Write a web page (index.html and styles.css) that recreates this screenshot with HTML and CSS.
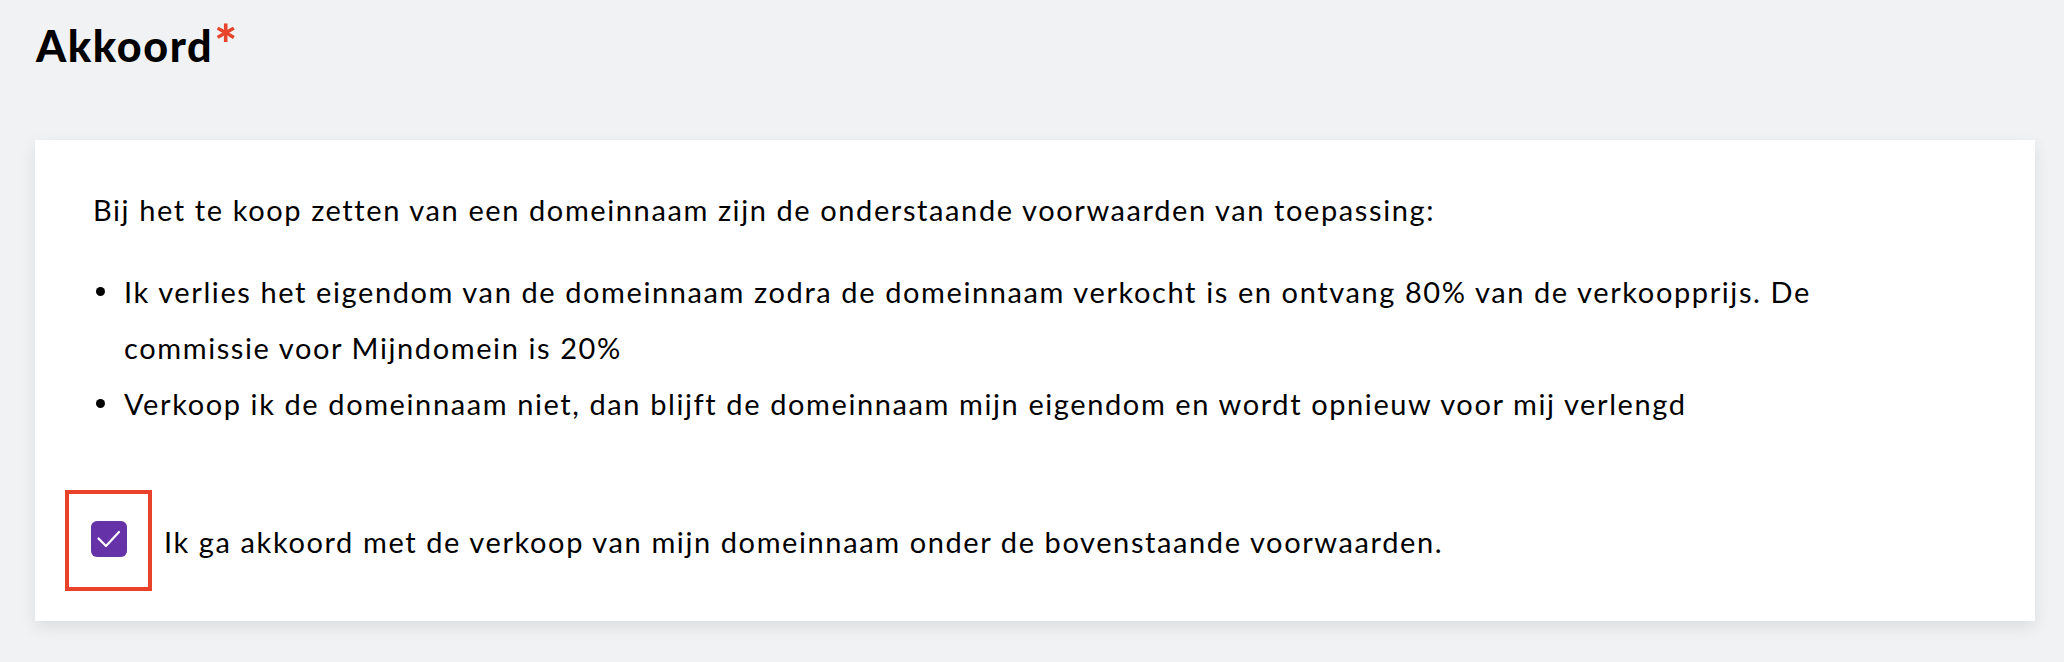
FILE: index.html
```html
<!DOCTYPE html>
<html lang="nl">
<head>
<meta charset="utf-8">
<title>Akkoord</title>
<link rel="stylesheet" href="styles.css">
</head>
<body>
<h1 class="title">Akkoord<span class="req">*</span></h1>
<section class="card">
  <p class="intro">Bij het te koop zetten van een domeinnaam zijn de onderstaande voorwaarden van toepassing:</p>
  <ul class="terms">
    <li><span>Ik verlies het eigendom van de domeinnaam zodra de domeinnaam verkocht is en ontvang 80% van de verkoopprijs. De commissie voor Mijndomein is 20%</span></li>
    <li><span>Verkoop ik de domeinnaam niet, dan blijft de domeinnaam mijn eigendom en wordt opnieuw voor mij verlengd</span></li>
  </ul>
  <label class="agree">
    <span class="check-wrap">
      <span class="checkbox">
        <svg viewBox="0 0 36 36" width="36" height="36"><path d="M7.5 17.5l7.5 7.5 13-14" fill="none" stroke="#fff" stroke-width="2.2" stroke-linecap="round" stroke-linejoin="round"/></svg>
      </span>
      <span class="highlight"></span>
    </span>
    <span class="agree-text">Ik ga akkoord met de verkoop van mijn domeinnaam onder de bovenstaande voorwaarden.</span>
  </label>
</section>
</body>
</html>
```
FILE: styles.css
```css
html, body {
  margin: 0;
  padding: 0;
}
body {
  background: #f1f2f4;
  font-family: Lato, "Liberation Sans", sans-serif;
  color: #000;
  width: 2064px;
  height: 662px;
  overflow: hidden;
}
.title {
  margin: 0;
  padding: 18px 0 0 36px;
  height: 56px;
  font-size: 43px;
  line-height: 56px;
  font-weight: 900;
  color: #000;
  letter-spacing: 1.6px;
}
.req {
  color: #e8442b;
  font-size: 54px;
  font-weight: 900;
  line-height: 0;
  vertical-align: -2px;
  margin-left: 1px;
}
.card {
  margin: 66px 0 0 35px;
  width: 2000px;
  box-sizing: border-box;
  background: #fff;
  box-shadow: 0 6px 16px rgba(0, 0, 0, 0.09);
  padding: 42px 100px 51px 58px;
  font-size: 29px;
  line-height: 56px;
  letter-spacing: 1.6px;
}
.intro {
  margin: 0;
}
.terms {
  list-style: none;
  margin: 26px 0 0 0;
  padding: 0;
}
.terms li {
  display: grid;
  grid-template-columns: 31px 1fr;
}
.terms li::before {
  content: "";
  width: 9px;
  height: 9px;
  border-radius: 50%;
  background: #000;
  margin: 23px 0 0 3px;
}
.agree {
  margin-top: 82px;
  display: flex;
  align-items: center;
  height: 56px;
}
.check-wrap {
  position: relative;
  display: block;
  width: 36px;
  height: 36px;
  margin: -6px 37px 0 -2px;
}
.checkbox {
  display: block;
  width: 36px;
  height: 36px;
  border-radius: 6px;
  background: #6532a7;
}
.checkbox svg {
  display: block;
}
.highlight {
  position: absolute;
  left: -26px;
  top: -31px;
  width: 87px;
  height: 101px;
  box-sizing: border-box;
  border: 4px solid #e8432a;
}
```
